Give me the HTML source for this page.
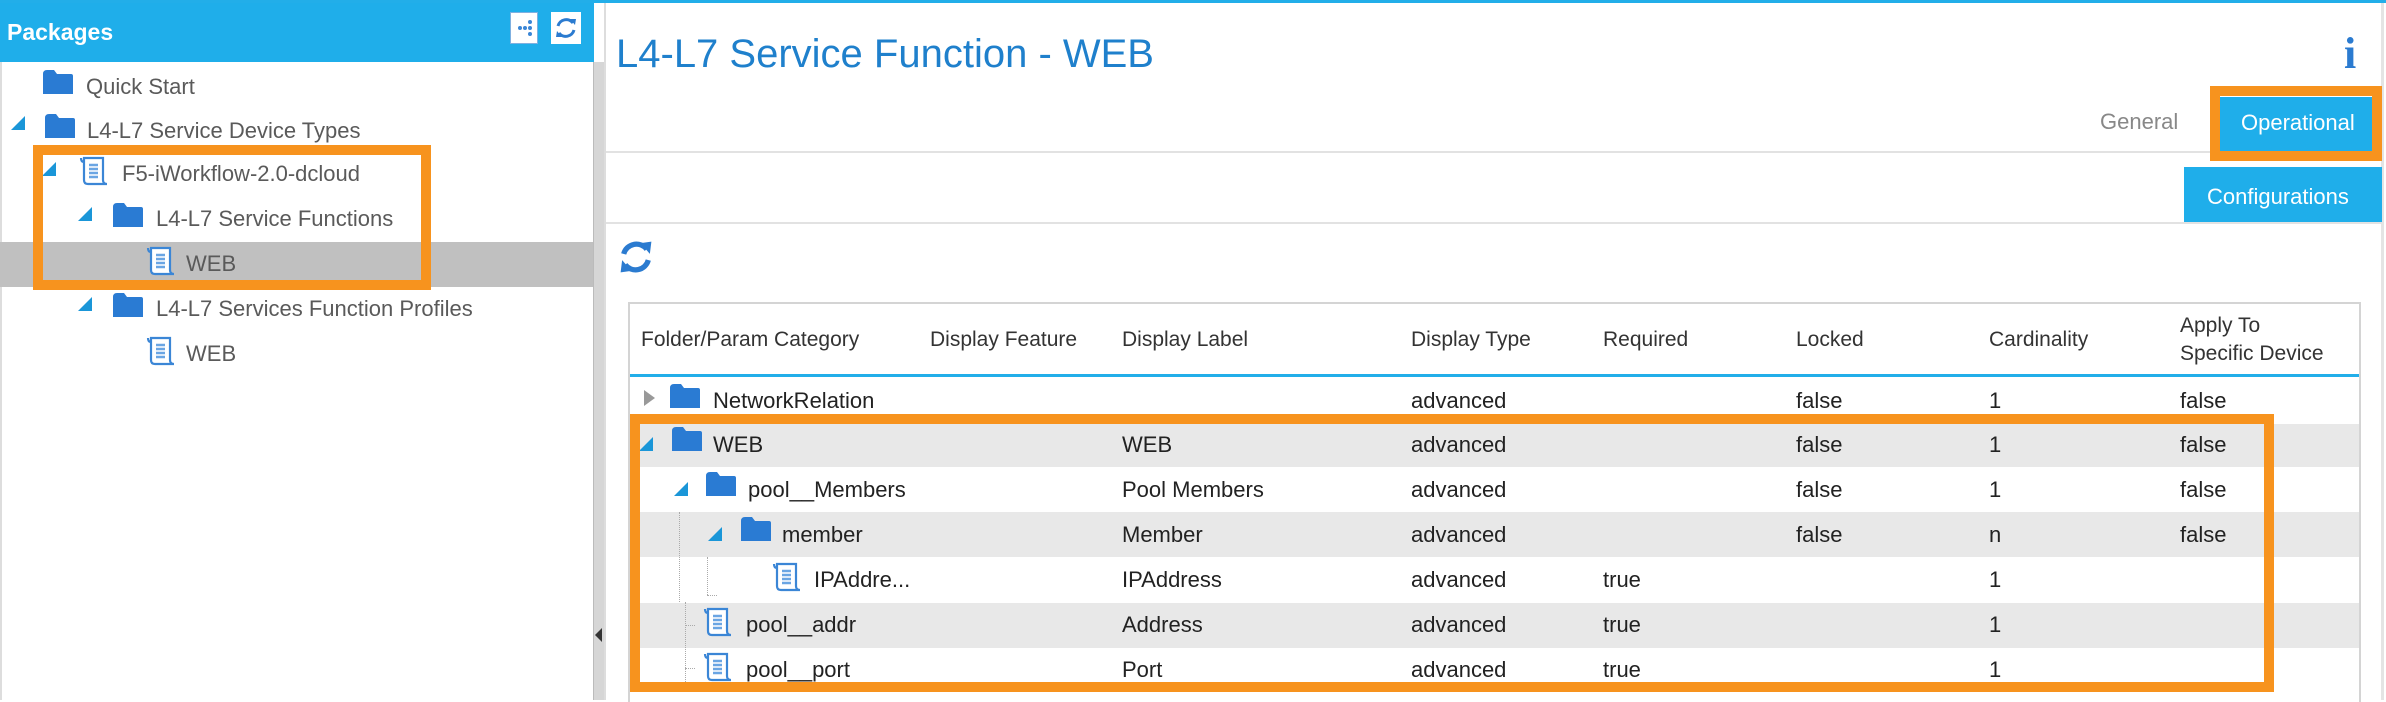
<!DOCTYPE html>
<html><head><meta charset="utf-8"><style>
*{margin:0;padding:0;box-sizing:border-box}
body{width:2386px;height:700px;overflow:hidden;background:#fff;font-family:"Liberation Sans",sans-serif;position:relative}
.a{position:absolute;white-space:nowrap}
.t{position:absolute;white-space:nowrap;font-size:22px;line-height:26px;color:#5a5a5a}
.r{position:absolute;white-space:nowrap;font-size:22px;line-height:26px;color:#222}
.h{position:absolute;white-space:nowrap;font-size:21px;line-height:24px;color:#333}
.ob{position:absolute;border:10px solid #f7931e}
</style></head><body>
<svg width="0" height="0" style="position:absolute">
<defs>
<g id="fold"><path d="M0 4 Q0 0 4 0 H11 L14 4 H28 Q30 4 30 6 V24 H0 Z" fill="#2a7bd3"/></g>
<g id="scr"><path d="M5 2 H24 V24 Q24 28 28 28 H9 Q5 28 5 24 Z M2 2 Q2 6 5 6" fill="#fff" stroke="#3b86d6" stroke-width="2.2"/><path d="M10 9 H19 M10 13 H19 M10 17 H19 M10 21 H19" stroke="#6aa5e3" stroke-width="2.4"/></g>
<g id="tri"><path d="M14 0 V14 H0 Z" fill="#1a96d8"/></g>
</defs></svg>

<div class="a" style="left:0;top:0;width:2386px;height:3px;background:#22aee9"></div>

<div class="a" style="left:0;top:3px;width:594px;height:59px;background:#1faeea"></div>
<div class="a" style="left:7px;top:18px;font-size:23px;font-weight:bold;color:#fff;line-height:28px">Packages</div>
<div class="a" style="left:510px;top:12px;width:28px;height:32px;background:#fff;border:1px solid #7fb0e0"></div>
<svg class="a" style="left:512px;top:14px" width="26" height="28"><circle cx="8" cy="14" r="2" fill="#3b86d6"/><circle cx="13" cy="14" r="2" fill="#3b86d6"/><circle cx="18" cy="8" r="2" fill="#3b86d6"/><circle cx="18" cy="20" r="2" fill="#3b86d6"/><circle cx="18" cy="14" r="2" fill="#3b86d6"/></svg>
<div class="a" style="left:551px;top:12px;width:30px;height:32px;background:#fff"></div>
<svg class="a" style="left:553px;top:15px" width="26" height="26" viewBox="0 0 26 26"><path d="M5 11 A8.5 8.5 0 0 1 20 8" fill="none" stroke="#2b7bd0" stroke-width="3"/><path d="M21 15 A8.5 8.5 0 0 1 6 18" fill="none" stroke="#2b7bd0" stroke-width="3"/><path d="M17 4 L23 4 L22 10 Z" fill="#2b7bd0"/><path d="M9 22 L3 22 L4 16 Z" fill="#2b7bd0"/></svg>

<div class="a" style="left:593px;top:62px;width:11px;height:638px;background:#d6d6d6;border-left:1px solid #bbb"></div>
<div class="a" style="left:0;top:62px;width:2px;height:638px;background:#ddd"></div>
<svg class="a" style="left:595px;top:628px" width="8" height="14"><path d="M7 0 V14 L0 7 Z" fill="#333"/></svg>

<div class="a" style="left:0;top:242px;width:593px;height:45px;background:#c0c0c0"></div>
<svg class="a" style="left:43px;top:70px" width="30" height="26"><use href="#fold"/></svg>
<div class="t" style="left:86px;top:74px">Quick Start</div>
<svg class="a" style="left:11px;top:116px" width="14" height="14"><use href="#tri"/></svg>
<svg class="a" style="left:45px;top:114px" width="30" height="26"><use href="#fold"/></svg>
<div class="t" style="left:87px;top:118px">L4-L7 Service Device Types</div>
<svg class="a" style="left:42px;top:162px" width="14" height="14"><use href="#tri"/></svg>
<svg class="a" style="left:79px;top:156px" width="30" height="30"><use href="#scr"/></svg>
<div class="t" style="left:122px;top:161px">F5-iWorkflow-2.0-dcloud</div>
<svg class="a" style="left:78px;top:207px" width="14" height="14"><use href="#tri"/></svg>
<svg class="a" style="left:113px;top:203px" width="30" height="26"><use href="#fold"/></svg>
<div class="t" style="left:156px;top:206px">L4-L7 Service Functions</div>
<svg class="a" style="left:146px;top:246px" width="30" height="30"><use href="#scr"/></svg>
<div class="t" style="left:186px;top:251px">WEB</div>
<svg class="a" style="left:78px;top:297px" width="14" height="14"><use href="#tri"/></svg>
<svg class="a" style="left:113px;top:293px" width="30" height="26"><use href="#fold"/></svg>
<div class="t" style="left:156px;top:296px">L4-L7 Services Function Profiles</div>
<svg class="a" style="left:146px;top:336px" width="30" height="30"><use href="#scr"/></svg>
<div class="t" style="left:186px;top:341px">WEB</div>
<div class="ob" style="left:33px;top:145px;width:398px;height:145px"></div>

<div class="a" style="left:604px;top:3px;width:2px;height:697px;background:#ddd"></div>
<div class="a" style="left:2381px;top:3px;width:3px;height:697px;background:#e4e4e4"></div>
<div class="a" style="left:616px;top:31px;font-size:40px;line-height:46px;color:#1f80cc">L4-L7 Service Function - WEB</div>
<div class="a" style="left:2344px;top:32px;font-family:'Liberation Serif',serif;font-weight:bold;font-size:44px;line-height:44px;color:#2b7bd0">i</div>
<div class="a" style="left:606px;top:151px;width:1776px;height:2px;background:#e2e2e2"></div>
<div class="a" style="left:2100px;top:109px;font-size:22px;line-height:26px;color:#888">General</div>
<div class="a" style="left:2220px;top:97px;width:160px;height:55px;background:#1faeea"></div>
<div class="a" style="left:2241px;top:110px;font-size:22px;line-height:26px;color:#fff">Operational</div>
<div class="ob" style="left:2210px;top:86px;width:172px;height:75px"></div>
<div class="a" style="left:2184px;top:167px;width:198px;height:56px;background:#1faeea"></div>
<div class="a" style="left:2207px;top:184px;font-size:22px;line-height:26px;color:#fff">Configurations</div>
<div class="a" style="left:606px;top:222px;width:1776px;height:2px;background:#e2e2e2"></div>
<svg class="a" style="left:615px;top:237px" width="42" height="40" viewBox="0 0 26 26"><path d="M5 11 A8.5 8.5 0 0 1 20 8" fill="none" stroke="#2b7bd0" stroke-width="3.4"/><path d="M21 15 A8.5 8.5 0 0 1 6 18" fill="none" stroke="#2b7bd0" stroke-width="3.4"/><path d="M16 4 L23 3 L22 11 Z" fill="#2b7bd0"/><path d="M10 22 L3 23 L4 15 Z" fill="#2b7bd0"/></svg>

<div class="a" style="left:628px;top:302px;width:1733px;height:400px;border:2px solid #d4d4d4;border-bottom:none"></div>
<div class="a" style="left:630px;top:374px;width:1729px;height:3px;background:#22aee9"></div>
<div class="h" style="left:641px;top:328px">Folder/Param Category</div>
<div class="h" style="left:930px;top:328px">Display Feature</div>
<div class="h" style="left:1122px;top:328px">Display Label</div>
<div class="h" style="left:1411px;top:328px">Display Type</div>
<div class="h" style="left:1603px;top:328px">Required</div>
<div class="h" style="left:1796px;top:328px">Locked</div>
<div class="h" style="left:1989px;top:328px">Cardinality</div>
<div class="h" style="left:2180px;top:312px;line-height:28px">Apply To<br>Specific Device</div>

<div class="a" style="left:630px;top:424px;width:1729px;height:43px;background:#e8e8e8"></div>
<div class="a" style="left:630px;top:512px;width:1729px;height:45px;background:#e8e8e8"></div>
<div class="a" style="left:630px;top:603px;width:1729px;height:45px;background:#e8e8e8"></div>

<div class="a" style="left:679px;top:512px;height:90px;border-left:1px dotted #aaa"></div>
<div class="a" style="left:685px;top:602px;height:86px;border-left:1px dotted #aaa"></div>
<div class="a" style="left:707px;top:557px;height:38px;border-left:1px dotted #aaa"></div>
<div class="a" style="left:707px;top:595px;width:10px;border-top:1px dotted #aaa"></div>
<div class="a" style="left:685px;top:625px;width:10px;border-top:1px dotted #aaa"></div>
<div class="a" style="left:685px;top:668px;width:10px;border-top:1px dotted #aaa"></div>

<svg class="a" style="left:644px;top:390px" width="12" height="16"><path d="M0 0 L11 8 L0 16 Z" fill="#999"/></svg>
<svg class="a" style="left:670px;top:384px" width="30" height="26"><use href="#fold"/></svg>
<div class="r" style="left:713px;top:388px">NetworkRelation</div>

<svg class="a" style="left:639px;top:437px" width="14" height="14"><use href="#tri"/></svg>
<svg class="a" style="left:672px;top:427px" width="30" height="26"><use href="#fold"/></svg>
<div class="r" style="left:713px;top:432px">WEB</div>

<svg class="a" style="left:674px;top:482px" width="14" height="14"><use href="#tri"/></svg>
<svg class="a" style="left:706px;top:472px" width="30" height="26"><use href="#fold"/></svg>
<div class="r" style="left:748px;top:477px">pool__Members</div>

<svg class="a" style="left:708px;top:527px" width="14" height="14"><use href="#tri"/></svg>
<svg class="a" style="left:741px;top:517px" width="30" height="26"><use href="#fold"/></svg>
<div class="r" style="left:782px;top:522px">member</div>

<svg class="a" style="left:772px;top:562px" width="30" height="30"><use href="#scr"/></svg>
<div class="r" style="left:814px;top:567px">IPAddre...</div>

<svg class="a" style="left:703px;top:607px" width="30" height="30"><use href="#scr"/></svg>
<div class="r" style="left:746px;top:612px">pool__addr</div>

<svg class="a" style="left:703px;top:652px" width="30" height="30"><use href="#scr"/></svg>
<div class="r" style="left:746px;top:657px">pool__port</div>

<div class="r" style="left:1122px;top:432px">WEB</div>
<div class="r" style="left:1122px;top:477px">Pool Members</div>
<div class="r" style="left:1122px;top:522px">Member</div>
<div class="r" style="left:1122px;top:567px">IPAddress</div>
<div class="r" style="left:1122px;top:612px">Address</div>
<div class="r" style="left:1122px;top:657px">Port</div>

<div class="r" style="left:1411px;top:388px">advanced</div>
<div class="r" style="left:1411px;top:432px">advanced</div>
<div class="r" style="left:1411px;top:477px">advanced</div>
<div class="r" style="left:1411px;top:522px">advanced</div>
<div class="r" style="left:1411px;top:567px">advanced</div>
<div class="r" style="left:1411px;top:612px">advanced</div>
<div class="r" style="left:1411px;top:657px">advanced</div>

<div class="r" style="left:1603px;top:567px">true</div>
<div class="r" style="left:1603px;top:612px">true</div>
<div class="r" style="left:1603px;top:657px">true</div>

<div class="r" style="left:1796px;top:388px">false</div>
<div class="r" style="left:1796px;top:432px">false</div>
<div class="r" style="left:1796px;top:477px">false</div>
<div class="r" style="left:1796px;top:522px">false</div>

<div class="r" style="left:1989px;top:388px">1</div>
<div class="r" style="left:1989px;top:432px">1</div>
<div class="r" style="left:1989px;top:477px">1</div>
<div class="r" style="left:1989px;top:522px">n</div>
<div class="r" style="left:1989px;top:567px">1</div>
<div class="r" style="left:1989px;top:612px">1</div>
<div class="r" style="left:1989px;top:657px">1</div>

<div class="r" style="left:2180px;top:388px">false</div>
<div class="r" style="left:2180px;top:432px">false</div>
<div class="r" style="left:2180px;top:477px">false</div>
<div class="r" style="left:2180px;top:522px">false</div>

<div class="ob" style="left:630px;top:414px;width:1644px;height:278px"></div>
</body></html>
